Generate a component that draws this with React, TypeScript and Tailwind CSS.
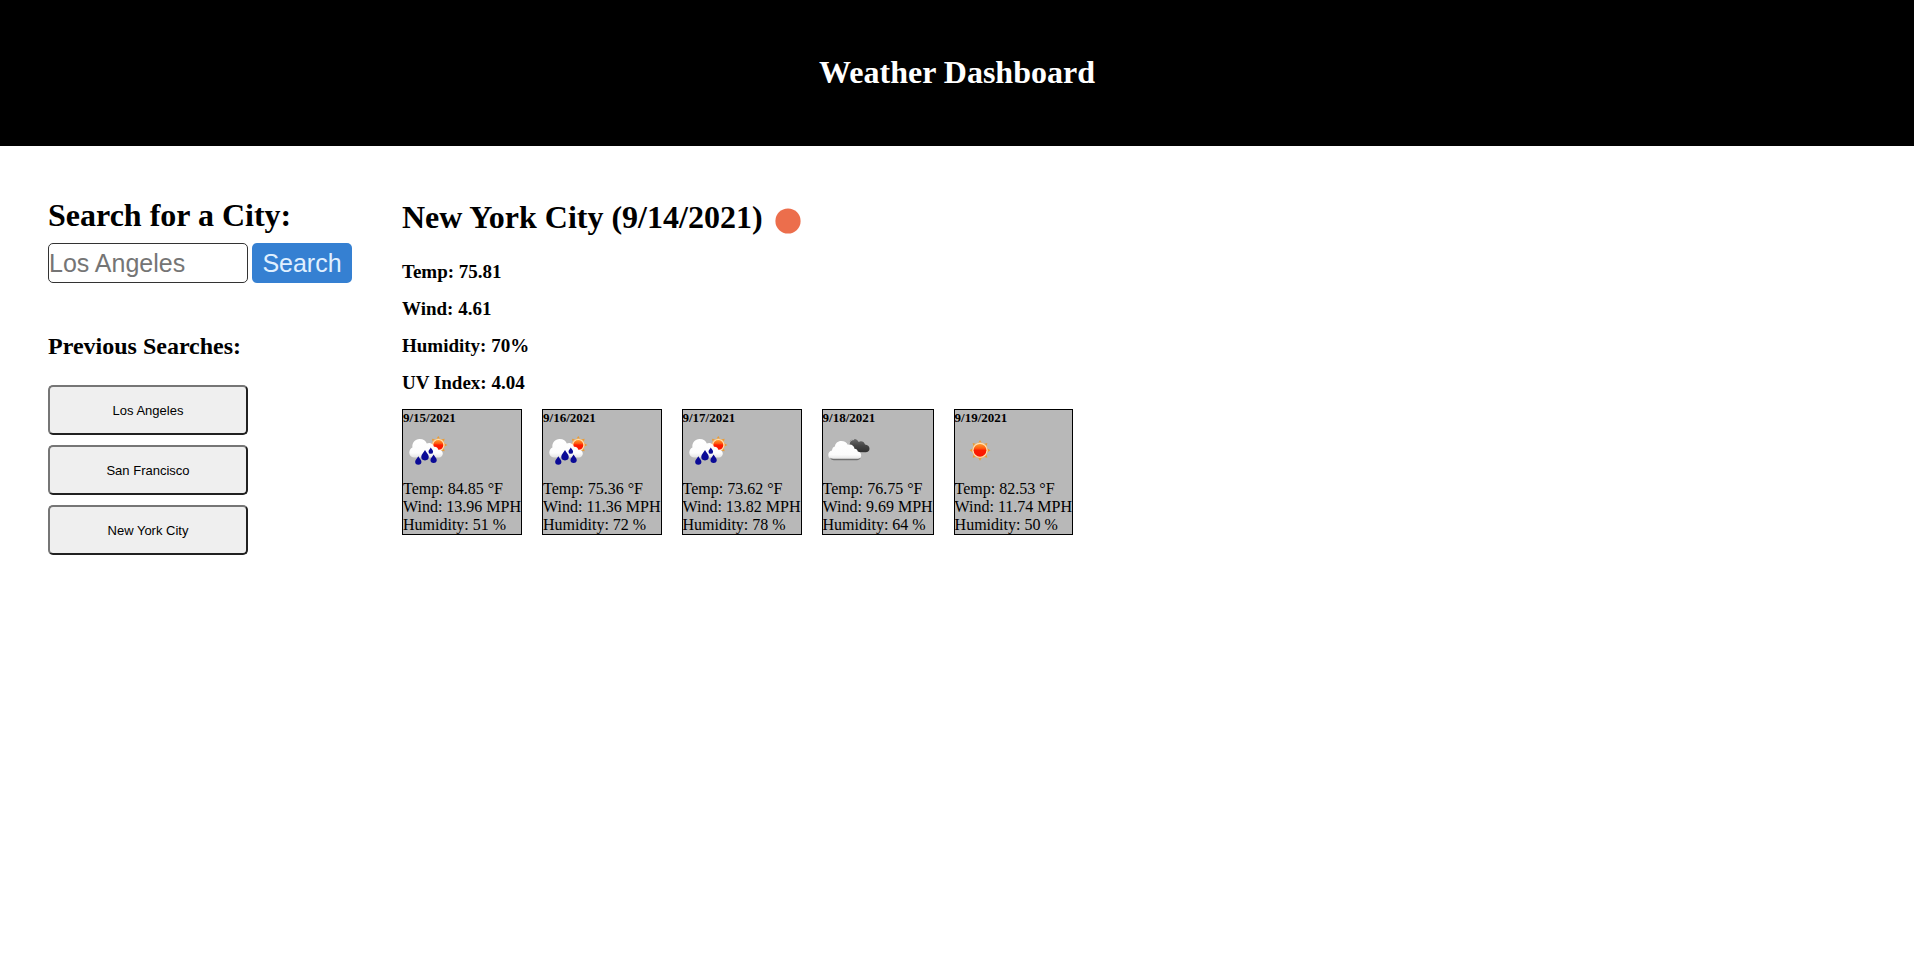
import { useState } from "react";

type Sky = "rain" | "clouds" | "sun";

const forecast: { date: string; sky: Sky; temp: string; wind: string; humidity: string }[] = [
  { date: "9/15/2021", sky: "rain", temp: "84.85", wind: "13.96", humidity: "51" },
  { date: "9/16/2021", sky: "rain", temp: "75.36", wind: "11.36", humidity: "72" },
  { date: "9/17/2021", sky: "rain", temp: "73.62", wind: "13.82", humidity: "78" },
  { date: "9/18/2021", sky: "clouds", temp: "76.75", wind: "9.69", humidity: "64" },
  { date: "9/19/2021", sky: "sun", temp: "82.53", wind: "11.74", humidity: "50" },
];

const current = ["Temp: 75.81", "Wind: 4.61", "Humidity: 70%", "UV Index: 4.04"];
const cities = ["Los Angeles", "San Francisco", "New York City"];
const rays = [0, 45, 90, 135, 180, 225, 270, 315];

function Sun({ cx, cy, r }: { cx: number; cy: number; r: number }) {
  return (
    <g transform={`translate(${cx} ${cy})`}>
      {rays.map((angle) => (
        <path key={angle} d={`M-1.6 ${-r - 0.2}L0 ${-r - 2.8}L1.6 ${-r - 0.2}Z`} fill="#ec9c34" transform={`rotate(${angle})`} />
      ))}
      <circle r={r + 0.3} fill="#f9b060" />
      <circle r={r - 0.1} fill="#ffe2b4" />
      <circle r={r - 1.2} fill="url(#sunFill)" />
    </g>
  );
}

function Drop({ x, y, s }: { x: number; y: number; s: number }) {
  return (
    <path
      d="M0 -5.2C.8 -3.2 3.7 -1 3.7 1.4A3.7 3.5 0 0 1 -3.7 1.4C-3.7 -1 -.8 -3.2 0 -5.2Z"
      fill="#0a0a96"
      transform={`translate(${x} ${y}) scale(${s})`}
    />
  );
}

function SkyIcon({ sky }: { sky: Sky }) {
  return (
    <svg viewBox="0 0 50 50" className="mt-px mb-1 block size-[50px]" role="img" aria-label={sky}>
      <defs>
        <linearGradient id="sunFill" x1="0" y1="0" x2="0" y2="1">
          <stop offset="0" stopColor="#ff9a2c" />
          <stop offset=".35" stopColor="#ff5a10" />
          <stop offset=".5" stopColor="#fc1c00" />
          <stop offset="1" stopColor="#fa1400" />
        </linearGradient>
        <linearGradient id="cloudFill" x1="0" y1="0" x2="0" y2="1">
          <stop offset="0" stopColor="#ffffff" />
          <stop offset=".75" stopColor="#fcfcfc" />
          <stop offset="1" stopColor="#e4e4e4" />
        </linearGradient>
        <linearGradient id="darkFill" x1="0" y1="0" x2="0" y2="1">
          <stop offset="0" stopColor="#6a6a6a" />
          <stop offset=".5" stopColor="#454545" />
          <stop offset="1" stopColor="#303030" />
        </linearGradient>
      </defs>
      {sky === "sun" && <Sun cx={25} cy={24.3} r={7.6} />}
      {sky === "rain" && (
        <>
          <Sun cx={35.3} cy={19} r={6.2} />
          <path
            d="M11 31.5C8 31.5 6.3 29.4 6.3 26.8C6.3 24.4 7.6 22.4 9.4 21.6C8.8 16.6 12 13 16.6 13C20.4 13 23 15 23.8 17.6C27 16.2 30.2 17.8 30.8 20.8C33 20.4 34.9 21.8 35.3 23.7C38 23.4 39.8 25.2 39.8 27.6C39.8 30 38.2 31.5 36 31.5Z"
            fill="url(#cloudFill)"
          />
          <Drop x={15.3} y={34.6} s={0.85} />
          <Drop x={22} y={29.4} s={1.02} />
          <Drop x={27.8} y={24.8} s={0.62} />
          <Drop x={30.6} y={32.8} s={0.85} />
        </>
      )}
      {sky === "clouds" && (
        <>
          <path
            d="M29 26C27 24 25.5 20 26 17C26.7 14.2 29 12.8 31.5 13C33.5 13.2 35 14.4 35.7 16C38 14.4 41.3 15.6 42 18.6C44.6 18.8 46.5 20.4 46.5 22.7C46.5 24.8 44.9 26.3 42.6 26.3Z"
            fill="url(#darkFill)"
          />
          <path d="M26.3 18.5C26.3 14.8 28.7 13.5 31.2 13.6" fill="none" stroke="#e5e5e5" strokeWidth=".8" />
          <path
            d="M10 33.2C7 33.2 5.3 31.6 5.3 29.2C5.3 26.6 6.8 25 9 24.6C9.2 22.5 10.2 21 11.9 20.6C12.2 17.4 14.8 15 18.2 15C21.4 15 23.8 16.6 24.8 18.8C28 17.6 31.2 19.6 31.5 22.8C33.4 22.8 34.6 24 34.8 25.6C37 25.8 38.2 27.4 38.2 29.5C38.2 31.8 36.5 33.2 34 33.2Z"
            fill="url(#cloudFill)"
          />
          <path d="M7 31.8C8 33.6 9.4 34.2 11 34.2H34C35.5 34.2 37 33.4 37.8 31.8C36.6 32.6 35.4 32.8 34 32.8H10.5C9.2 32.8 8 32.5 7 31.8Z" fill="#707070" />
        </>
      )}
    </svg>
  );
}

export default function App() {
  const [city, setCity] = useState("");

  return (
    <div className="bg-white font-['Liberation_Serif',serif] text-black">
      <header className="bg-black px-4 pt-[54px] pb-[55px] text-center text-white">
        <h1 className="text-[32px] leading-[37px] font-bold">Weather Dashboard</h1>
      </header>

      <div className="flex items-start gap-[50px] px-12 pt-[50px]">
        <aside className="shrink-0">
          <form onSubmit={(e) => e.preventDefault()}>
            <label htmlFor="city" className="block text-[32px] leading-[39px] font-bold">
              Search for a City:
            </label>
            <div className="mt-2 flex gap-1 font-['Liberation_Sans',sans-serif] text-[25px]">
              <input
                id="city"
                type="text"
                placeholder="Los Angeles"
                value={city}
                onChange={(e) => setCity(e.target.value)}
                className="h-10 w-[200px] rounded-[5px] border border-[#333333] bg-white placeholder:text-[#757575]"
              />
              <button type="submit" className="h-10 w-[100px] rounded-[5px] bg-[#3580d2] pt-0.5 text-[#e0f0ff]">
                Search
              </button>
            </div>
          </form>

          <h2 className="mt-[49px] text-2xl leading-7 font-bold">Previous Searches:</h2>
          <div className="mt-[25px] flex w-[200px] flex-col gap-2.5">
            {cities.map((name) => (
              <button
                key={name}
                type="button"
                className="h-[50px] rounded-[5px] border-2 border-t-[#767676] border-r-[#212121] border-b-[#212121] border-l-[#767676] bg-[#efefef] pt-0.5 font-['Liberation_Sans',sans-serif] text-[13px]"
              >
                {name}
              </button>
            ))}
          </div>
        </aside>

        <main>
          <div className="flex items-start">
            <h2 className="text-[32px] leading-[42px] font-bold">New York City (9/14/2021)</h2>
            <svg viewBox="0 0 50 50" className="size-[50px]" role="img" aria-label="clear sky">
              <circle cx="25" cy="25" r="12.6" fill="#ec6e4c" />
            </svg>
          </div>

          <div className="mt-[15px] flex flex-col gap-[15px] text-[19px] leading-[22px] font-bold">
            {current.map((line) => (
              <p key={line}>{line}</p>
            ))}
          </div>

          <div className="mt-[15px] flex gap-5">
            {forecast.map((day) => (
              <article key={day.date} className="border border-black bg-[#b8b8b8] leading-[18px]">
                <h3 className="text-[13px] leading-[15px] font-bold">{day.date}</h3>
                <SkyIcon sky={day.sky} />
                <p>Temp: {day.temp} °F</p>
                <p>Wind: {day.wind} MPH</p>
                <p>Humidity: {day.humidity} %</p>
              </article>
            ))}
          </div>
        </main>
      </div>
    </div>
  );
}
